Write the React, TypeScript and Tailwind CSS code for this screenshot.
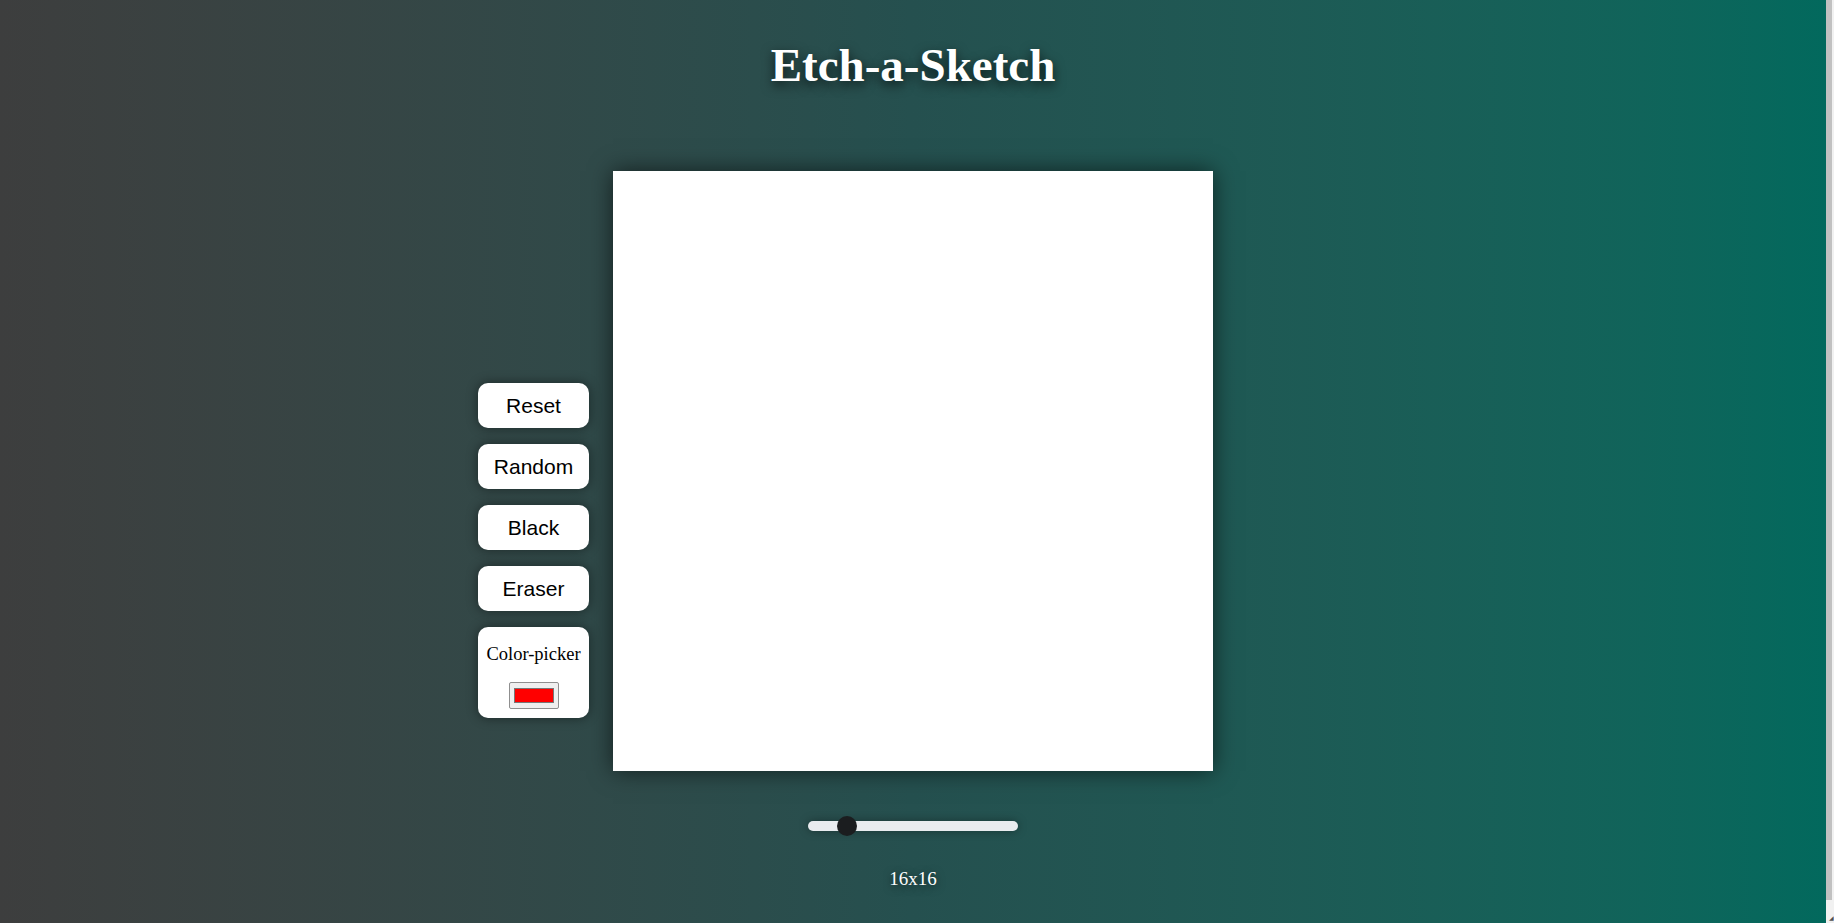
import { useState } from 'react';

const buttons = ['Reset', 'Random', 'Black', 'Eraser'];

export default function App() {
  const [size, setSize] = useState(16);
  const [color, setColor] = useState('#ff0000');

  return (
    <div className="flex h-screen w-full overflow-hidden">
      <div className="min-h-[938px] flex-1 bg-gradient-to-r from-[#3d3e3e] via-[#25504f] to-[#02695d] font-['Liberation_Serif',serif] text-white">
        <h1 className="pt-[41px] text-center text-[47px] font-bold leading-[48px] [text-shadow:0_4px_12px_rgba(0,0,0,0.7)]">
          Etch-a-Sketch
        </h1>

        <div className="mt-[82px] grid grid-cols-[1fr_600px_1fr] gap-x-[24px]">
          <div className="mt-[212px] flex flex-col gap-[16px] justify-self-end">
            {buttons.map((label) => (
              <button
                key={label}
                className="h-[45px] w-[111px] rounded-[10px] bg-white font-['Liberation_Sans',Arial,sans-serif] text-[21px] text-black shadow-[0_0_12px_rgba(0,0,0,0.45)]"
              >
                {label}
              </button>
            ))}
            <div className="flex h-[91px] w-[111px] flex-col items-center rounded-[10px] bg-white pt-[16px] text-black shadow-[0_0_12px_rgba(0,0,0,0.45)]">
              <label htmlFor="picker" className="text-[18.5px] leading-[22px]">
                Color-picker
              </label>
              <input
                id="picker"
                type="color"
                value={color}
                onChange={(e) => setColor(e.currentTarget.value)}
                className="mt-[17px] h-[27px] w-[50px] rounded-[2px] border border-[#8f8f8f] bg-[#efefef] px-[2px] py-[1px]"
              />
            </div>
          </div>

          <div className="h-[600px] w-[600px] bg-white shadow-[0_0_22px_rgba(0,0,0,0.6)]" />
          <div />
        </div>

        <div className="mt-[50px] flex justify-center">
          <input
            type="range"
            min={1}
            max={100}
            value={size}
            onChange={(e) => setSize(Number(e.currentTarget.value))}
            className="h-[10px] w-[210px] cursor-pointer appearance-none rounded-full bg-[#e9ecef] shadow-[0_0_10px_rgba(0,0,0,0.35)] [&::-webkit-slider-thumb]:h-[20px] [&::-webkit-slider-thumb]:w-[20px] [&::-webkit-slider-thumb]:appearance-none [&::-webkit-slider-thumb]:rounded-full [&::-webkit-slider-thumb]:bg-[#1b1d1f]"
          />
        </div>

        <p className="mt-[38px] text-center text-[19px] leading-[19px] [text-shadow:0_2px_8px_rgba(0,0,0,0.6)]">
          {size}x{size}
        </p>
      </div>

      {/* page scrollbar */}
      <div className="flex w-[8px] flex-col bg-[#f1f1f1]">
        <div className="h-[900px] w-[6px] bg-[#c1c1c1]" />
        <div className="ml-auto mt-auto mb-[2px] text-[6px] leading-[6px] text-[#505050]">◢</div>
      </div>
    </div>
  );
}
